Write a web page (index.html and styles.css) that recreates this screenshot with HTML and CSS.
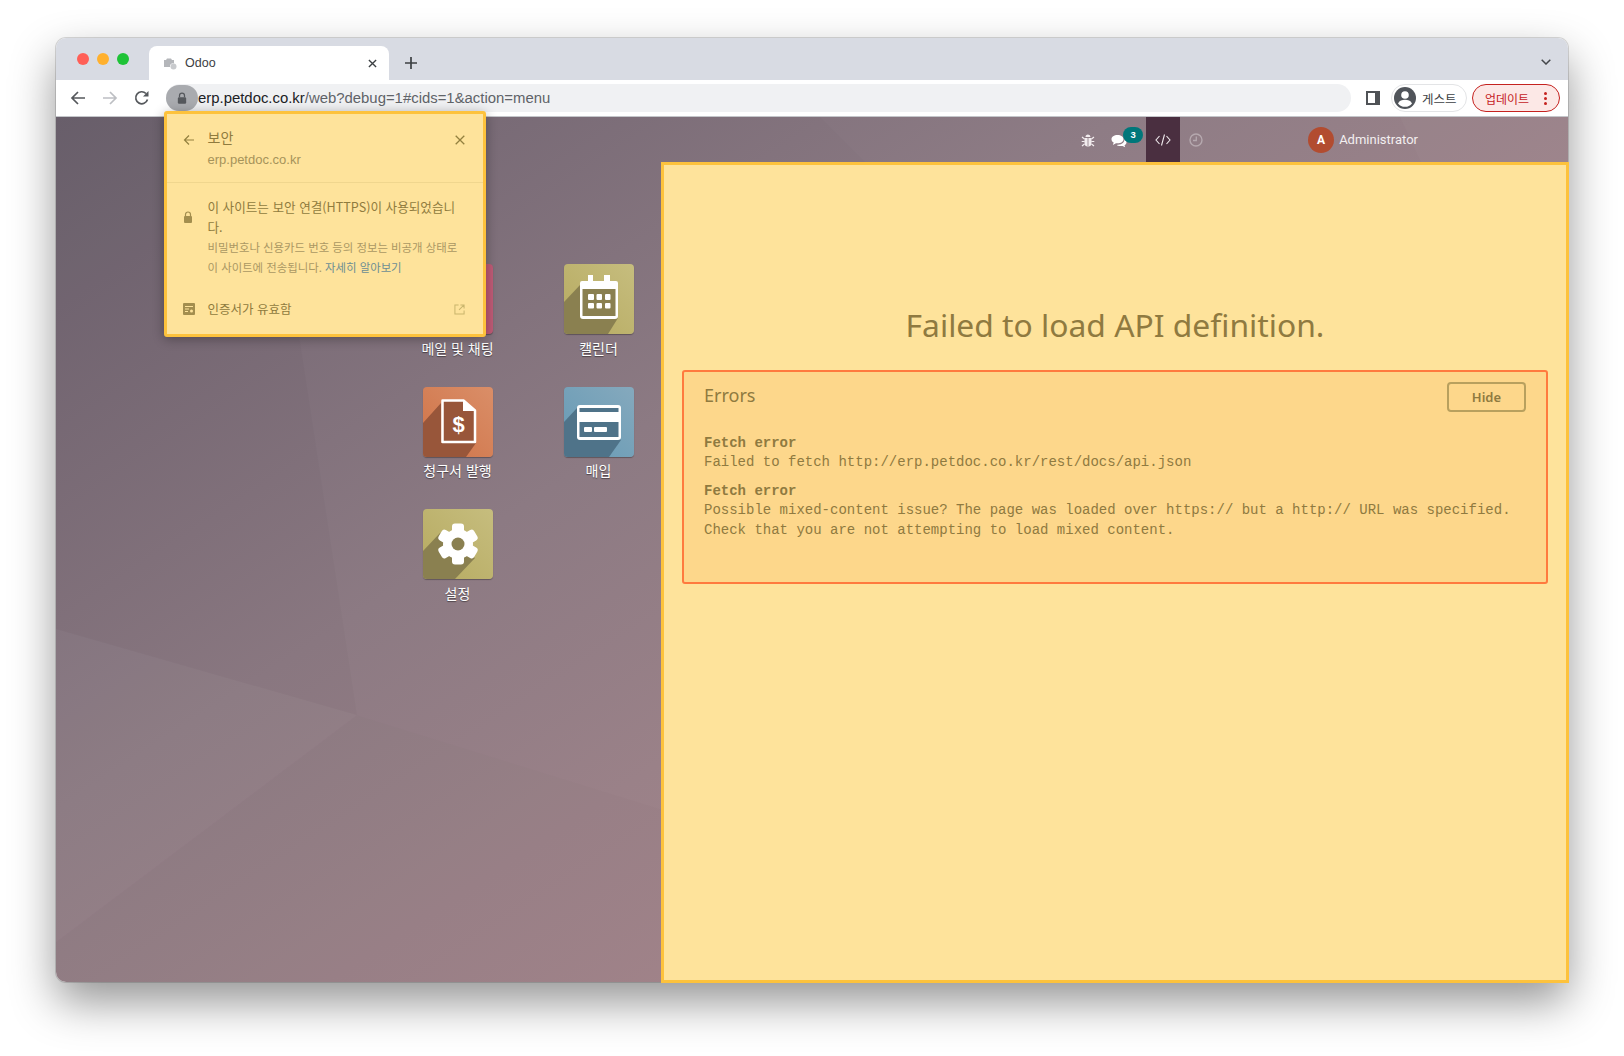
FILE: index.html
```html
<!DOCTYPE html>
<html lang="ko">
<head>
<meta charset="utf-8">
<title>Odoo</title>
<link rel="stylesheet" href="styles.css">
</head>
<body>
<div class="window">
  <div class="tabstrip">
    <div class="lights"><span class="light red"></span><span class="light amber"></span><span class="light green"></span></div>
    <div class="tab">
      <svg class="favicon" viewBox="0 0 14 14"><path d="M1 4h2l1-1.500h4L9 4h2v3.500a3 3 0 0 0-4 3.500H1z" fill="#b4b6ba"/><circle cx="10.500" cy="10.500" r="3" fill="#c8cacd"/></svg>
      <span class="tab-title">Odoo</span>
      <svg class="tab-close" viewBox="0 0 10 10"><path d="M1 1l8 8M9 1l-8 8" stroke="#3c4043" stroke-width="1.500"/></svg>
    </div>
    <svg class="newtab" viewBox="0 0 12 12"><path d="M6 0v12M0 6h12" stroke="#3c4043" stroke-width="1.700"/></svg>
    <svg class="tab-more" viewBox="0 0 10 6"><path d="M.7.7L5 5l4.300-4.300" fill="none" stroke="#44474b" stroke-width="1.500"/></svg>
  </div>
  <div class="toolbar">
    <svg class="nav" viewBox="0 0 16 16"><path d="M15 8H2M8 2L2 8l6 6" fill="none" stroke="#55585c" stroke-width="1.700"/></svg>
    <svg class="nav" viewBox="0 0 16 16"><path d="M1 8h13M8 2l6 6-6 6" fill="none" stroke="#bdbfc3" stroke-width="1.700"/></svg>
    <svg class="nav" viewBox="0 0 16 16"><path d="M13.500 9.500A6 6 0 1 1 12 3.500" fill="none" stroke="#55585c" stroke-width="1.700"/><path d="M14.500 1v5.500H9z" fill="#55585c"/></svg>
    <div class="omnibox">
      <span class="lock-pill"><svg class="lock-icon" viewBox="0 0 12 14"><path d="M3 6V4a3 3 0 0 1 6 0v2" fill="none" stroke="#55585c" stroke-width="1.500"/><rect x="1" y="6" width="10" height="8" rx="1.500" fill="#55585c"/></svg></span>
      <span class="url"><span class="host">erp.petdoc.co.kr</span>/web?debug=1#cids=1&amp;action=menu</span>
    </div>
    <svg class="sidepanel" viewBox="0 0 14 14"><path d="M0 0h14v14H0z" fill="#4f5256"/><path d="M2 2h7v10H2z" fill="#fff"/></svg>
    <div class="guest">
      <svg class="guest-avatar" viewBox="0 0 22 22"><circle cx="11" cy="11" r="11" fill="#50545a"/><circle cx="11" cy="8" r="3.800" fill="#fff"/><path d="M4 16.500c1.500-3 4-3.700 7-3.700s5.500.7 7 3.700a9 9 0 0 1-14 0z" fill="#fff"/></svg>
      <span class="guest-label">게스트</span>
    </div>
    <div class="update">
      <span class="update-label">업데이트</span>
      <span class="update-dots"><i></i><i></i><i></i></span>
    </div>
  </div>
  <div class="content">
    <svg class="facets" viewBox="0 0 1512 865" preserveAspectRatio="none">
      <defs>
        <linearGradient id="bg" gradientUnits="userSpaceOnUse" x1="0" y1="0" x2="635" y2="973">
          <stop offset="0" stop-color="#6b606d"/>
          <stop offset=".5" stop-color="#8c7a83"/>
          <stop offset=".75" stop-color="#9a8188"/>
          <stop offset="1" stop-color="#a6868c"/>
        </linearGradient>
      </defs>
      <rect width="1512" height="865" fill="url(#bg)"/>
      <polygon points="0,0 210,0 301,598 0,512" fill="#000" opacity=".02"/>
      <polygon points="0,512 301,598 0,825" fill="#fff" opacity=".015"/>
      <polygon points="0,825 301,598 605,692 605,865 0,865" fill="#000" opacity=".008"/>
      <polygon points="764,0 1512,0 1512,45 809,45" fill="#fff" opacity=".018"/>
      <polygon points="1344,0 1512,0 1512,45 1365,45" fill="#fff" opacity=".025"/>
    </svg>
    <div class="topbar">
      <span class="sys-item sys-bug"><svg class="sys-icon" viewBox="0 0 14 14"><path d="M4.500 4a2.500 2.500 0 0 1 5 0zM3.500 5h7v5a3.500 3.500 0 0 1-7 0z" fill="#f2ecee"/><path d="M1 4l2.500 2M13 4l-2.500 2M.7 8.500h3M13.300 8.500h-3M1 13l2.500-2M13 13l-2.500-2" stroke="#f2ecee" stroke-width="1.200"/><path d="M7 5v8" stroke="#8c7a82" stroke-width=".8"/></svg></span>
      <span class="sys-item sys-chat">
        <svg class="chat-icon" viewBox="0 0 16 14"><path d="M6.500 1C3 1 .5 2.800.5 5.200c0 1.400.9 2.600 2.200 3.400L1.800 11 5 9.300h1.500c3.500 0 6-1.700 6-4.100S10 1 6.500 1z" fill="#fff"/><path d="M13.500 5.500c1.300.7 2 1.800 2 3 0 1.200-.8 2.200-2 2.800l.7 2-2.700-1.400H9c-1.300 0-2.500-.4-3.300-1 4 0 7.800-1.800 7.800-5.400z" fill="#fff"/></svg>
        <span class="badge">3</span>
      </span>
      <span class="sys-item sys-debug"><svg class="code-icon" viewBox="0 0 16 12"><path d="M4.500 2L1 6l3.500 4M11.500 2L15 6l-3.500 4M9.500.5l-3 11" fill="none" stroke="#efe9ec" stroke-width="1.100"/></svg></span>
      <span class="sys-item sys-clock"><svg class="sys-icon" viewBox="0 0 14 14"><circle cx="7" cy="7" r="6" fill="none" stroke="#b5a8ae" stroke-width="1.400"/><path d="M7.300 3.500V7.500H4" fill="none" stroke="#b5a8ae" stroke-width="1.300"/></svg></span>
      <span class="user"><span class="avatar">A</span><span class="user-name">Administrator</span></span>
    </div>
    <div class="apps">
      <a class="app">
        <span class="tile tile-mail"></span>
        <span class="app-label">메일 및 채팅</span>
      </a>
      <a class="app">
        <span class="tile tile-olive">
          <svg class="tile-art" viewBox="0 0 70 70">
            <polygon points="0,38 16,21 54,54 44,70 0,70" fill="#8a8050"/>
            <path d="M24 11h5v6h11v-6h6v6h6a2 2 0 0 1 2 2v33a3 3 0 0 1-3 3H19a3 3 0 0 1-3-3V19a2 2 0 0 1 2-2h6z" fill="#fff"/>
            <rect x="18.500" y="25" width="33" height="27" fill="#8a8050"/>
            <g fill="#fff"><rect x="24" y="30" width="6" height="6" rx="1"/><rect x="32.500" y="30" width="5.500" height="6" rx="1"/><rect x="41" y="30" width="5.500" height="6" rx="1"/><rect x="24" y="39" width="6" height="5.500" rx="1"/><rect x="32.500" y="39" width="5.500" height="5.500" rx="1"/><rect x="41" y="39" width="5.500" height="5.500" rx="1"/></g>
          </svg>
        </span>
        <span class="app-label">캘린더</span>
      </a>
      <a class="app">
        <span class="tile tile-orange">
          <svg class="tile-art" viewBox="0 0 70 70">
            <polygon points="0,36 18,16 18,56 53,56 43,70 0,70" fill="#98563a"/>
            <path d="M19.500 13.500H40.500L52 23.500V55H19.500z" fill="#98563a" stroke="#fff" stroke-width="2.500" stroke-linejoin="round"/>
            <path d="M40 12.500v11.500h13z" fill="#fff"/>
            <text class="dollar" x="35.500" y="44.500" text-anchor="middle">$</text>
          </svg>
        </span>
        <span class="app-label">청구서 발행</span>
      </a>
      <a class="app">
        <span class="tile tile-blue">
          <svg class="tile-art" viewBox="0 0 70 70">
            <polygon points="0,35 13,21 57,53 45,70 0,70" fill="#4f7389"/>
            <rect x="13" y="18" width="44" height="35" rx="3" fill="#fff"/>
            <rect x="15.500" y="21" width="39" height="4" fill="#4f7389"/>
            <rect x="15.500" y="35" width="39" height="15" fill="#4f7389"/>
            <rect x="20" y="40" width="8" height="5" rx="1" fill="#fff"/>
            <rect x="30" y="40" width="13" height="5" rx="1" fill="#fff"/>
          </svg>
        </span>
        <span class="app-label">매입</span>
      </a>
      <a class="app">
        <span class="tile tile-olive">
          <svg class="tile-art" viewBox="0 0 70 70">
            <polygon points="0,42 17,24 52,49 32,70 0,70" fill="#8a8050"/>
            <g fill="#fff">
              <rect x="29" y="14.500" width="12" height="41" rx="3"/>
              <rect x="29" y="14.500" width="12" height="41" rx="3" transform="rotate(60 35 35)"/>
              <rect x="29" y="14.500" width="12" height="41" rx="3" transform="rotate(120 35 35)"/>
              <circle cx="35" cy="35" r="15"/>
            </g>
            <circle cx="35" cy="35" r="6.500" fill="#8a8050"/>
          </svg>
        </span>
        <span class="app-label">설정</span>
      </a>
    </div>
  </div>

  <div class="security">
    <div class="sec-head">
      <svg class="sec-arrow" viewBox="0 0 12 12"><path d="M11 6H1.500M6 1.500L1.500 6 6 10.500" fill="none" stroke="#93803f" stroke-width="1.200"/></svg>
      <div class="sec-titles">
        <div class="sec-title">보안</div>
        <div class="sec-host">erp.petdoc.co.kr</div>
      </div>
      <svg class="sec-close" viewBox="0 0 10 10"><path d="M.7.7l8.600 8.600M9.300.7L.7 9.300" stroke="#93803f" stroke-width="1.300"/></svg>
    </div>
    <div class="sec-body">
      <svg class="sec-lock" viewBox="0 0 10 12"><path d="M2.500 5V3.500a2.500 2.500 0 0 1 5 0V5" fill="none" stroke="#a38e4e" stroke-width="1.200"/><rect x="1" y="5" width="8" height="7" rx="1" fill="#a38e4e"/></svg>
      <div class="sec-text">
        <div class="sec-strong">이 사이트는 보안 연결(HTTPS)이 사용되었습니다.</div>
        <div class="sec-note">비밀번호나 신용카드 번호 등의 정보는 비공개 상태로 이 사이트에 전송됩니다. <span class="sec-link">자세히 알아보기</span></div>
      </div>
    </div>
    <div class="sec-cert">
      <svg class="sec-certicon" viewBox="0 0 12 12"><rect width="12" height="12" rx="1" fill="#a38e4e"/><path d="M2 3.500h8M2 6h4M2 8.500h3" stroke="#fee39b" stroke-width="1"/><circle cx="8.500" cy="8" r="1.500" fill="#fee39b"/></svg>
      <span class="sec-certlabel">인증서가 유효함</span>
      <svg class="sec-ext" viewBox="0 0 12 12"><path d="M5 1H1v10h10V7M7 1h4v4M11 1L5.500 6.500" fill="none" stroke="#c9b56d" stroke-width="1.100"/></svg>
    </div>
  </div>

  <div class="swagger">
    <h1 class="swagger-title">Failed to load API definition.</h1>
    <section class="errors">
      <header class="errors-head">
        <h2 class="errors-title">Errors</h2>
        <button class="hide-btn">Hide</button>
      </header>
      <div class="err-block">
        <b class="err-name">Fetch error</b>
        <span class="err-line">Failed to fetch http://erp.petdoc.co.kr/rest/docs/api.json</span>
      </div>
      <div class="err-block">
        <b class="err-name">Fetch error</b>
        <span class="err-line">Possible mixed-content issue? The page was loaded over https:// but a http:// URL was specified.</span>
        <span class="err-line">Check that you are not attempting to load mixed content.</span>
      </div>
    </section>
  </div>
</div>
</body>
</html>
```
FILE: styles.css
```css
* { box-sizing: border-box; }
html, body { margin: 0; height: 100%; }
body {
  width: 1624px;
  height: 1056px;
  padding: 38px 56px 74px;
  background: #fff;
  font-family: "Liberation Sans", "Noto Sans CJK KR", sans-serif;
  overflow: hidden;
}
.window {
  position: relative;
  width: 1512px;
  height: 944px;
  display: flex;
  flex-direction: column;
  border-radius: 10px;
  box-shadow: 0 20px 45px 0 rgba(0, 0, 0, .42), 0 0 0 1px rgba(0, 0, 0, .14);
}
.tabstrip {
  height: 42px;
  flex: none;
  display: flex;
  align-items: flex-end;
  background: #d8dbe3;
  border-radius: 10px 10px 0 0;
  padding-left: 21px;
}
.lights { display: flex; gap: 8px; align-self: flex-start; padding-top: 15px; width: 72px; }
.light { width: 12px; height: 12px; border-radius: 50%; }
.red { background: #ff5f57; }
.amber { background: #ffb02e; }
.green { background: #1ec337; }
.tab {
  width: 240px;
  height: 34px;
  background: #fff;
  border-radius: 8px 8px 0 0;
  display: flex;
  align-items: center;
  padding: 0 12px 0 14px;
}
.favicon { width: 14px; height: 14px; }
.tab-title { margin-left: 8px; flex: 1; font-size: 12.500px; color: #3c4043; }
.tab-close { width: 9px; height: 9px; }
.newtab { width: 12px; height: 12px; margin: 0 0 11px 16px; }
.tab-more { width: 10px; height: 6px; margin: 0 17px 15px auto; }
.toolbar {
  height: 37px;
  flex: none;
  display: flex;
  align-items: center;
  background: #fff;
  border-bottom: 1px solid #c4c6ca;
  padding-left: 14px;
}
.nav { width: 16px; height: 16px; margin-right: 16px; }
.omnibox {
  width: 1185px;
  height: 28px;
  border-radius: 14px;
  background: #f0f1f3;
  display: flex;
  align-items: center;
}
.lock-pill {
  width: 32px;
  height: 26px;
  border-radius: 13px;
  background: #a9abaf;
  display: flex;
  align-items: center;
  justify-content: center;
}
.lock-icon { width: 10px; height: 12px; }
.url { font-size: 14.900px; line-height: 26px; color: #5f6368; }
.host { color: #202124; }
.sidepanel { width: 14px; height: 14px; margin-left: 15px; }
.guest {
  width: 76px;
  height: 28px;
  margin-left: 11px;
  border: 1px solid #e3e4e6;
  border-radius: 14px;
  display: flex;
  align-items: center;
  padding-left: 2px;
  gap: 6px;
}
.guest-avatar { width: 22px; height: 22px; }
.guest-label { font-size: 12.500px; color: #3c4043; }
.update {
  width: 88px;
  height: 28px;
  margin-left: 5px;
  border: 1px solid #c5221f;
  border-radius: 14px;
  background: #fce8e6;
  display: flex;
  align-items: center;
  padding-left: 12px;
}
.update-label { font-size: 12px; color: #c5221f; flex: 1; }
.update-dots { display: flex; flex-direction: column; gap: 2px; margin-right: 12px; }
.update-dots i { width: 3px; height: 3px; border-radius: 50%; background: #c5221f; }
.content {
  flex: 1;
  position: relative;
  overflow: hidden;
  border-radius: 0 0 10px 10px;
}
.facets { position: absolute; inset: 0; width: 100%; height: 100%; }
.topbar {
  position: relative;
  height: 45px;
  display: flex;
  align-items: center;
  justify-content: flex-end;
  padding-right: 150px;
  color: #fff;
}
.sys-item { height: 45px; display: flex; align-items: center; justify-content: center; position: relative; }
.sys-bug { width: 33px; }
.sys-chat { width: 42px; justify-content: flex-start; padding-left: 7px; }
.sys-debug { width: 34px; background: #4a2f40; }
.sys-clock { width: 32px; }
.sys-icon { width: 14px; height: 14px; }
.chat-icon { width: 16px; height: 14px; margin-top: 2px; }
.code-icon { width: 16px; height: 12px; }
.badge {
  position: absolute;
  left: 19px;
  top: 10px;
  width: 20px;
  height: 16px;
  border-radius: 8px;
  background: #00777a;
  font: 700 9.500px/16px "Liberation Sans", sans-serif;
  text-align: center;
}
.user { display: flex; align-items: center; margin-left: 96px; gap: 5px; }
.avatar {
  width: 26px;
  height: 26px;
  border-radius: 50%;
  background: #b24c30;
  font: 700 12px/26px Roboto, sans-serif;
  text-align: center;
}
.user-name { font: 13px Roboto, sans-serif; color: #f3eff0; }
.apps {
  position: relative;
  margin: 102px 0 0 331px;
  display: grid;
  grid-template-columns: repeat(2, 141px);
  grid-auto-rows: 122.500px;
}
.app { display: flex; flex-direction: column; align-items: center; }
.tile {
  position: relative;
  display: block;
  width: 70px;
  height: 70px;
  border-radius: 4px;
  overflow: hidden;
  box-shadow: 0 1px 1px rgba(0, 0, 0, .3);
}
.tile-mail { background: #bf5b76; }
.tile-olive { background: linear-gradient(to top right, #b6aa60, #c6bd7e); }
.tile-orange { background: linear-gradient(to top right, #cf7347, #da8e68); }
.tile-blue { background: linear-gradient(to top right, #669ab5, #85a9bd); }
.tile-art { display: block; width: 70px; height: 70px; }
.dollar { font: 700 22px "Liberation Sans", sans-serif; fill: #fff; }
.app-label {
  margin-top: 3.500px;
  font: 14px/20px "Noto Sans CJK KR", sans-serif;
  color: #fff;
  text-shadow: 0 1px 1px rgba(0, 0, 0, .45);
}
.security {
  position: absolute;
  left: 108px;
  top: 73px;
  width: 322px;
  height: 226px;
  background: #fee39b;
  border: 3px solid #fdc23c;
  border-radius: 3px;
  box-shadow: 0 2px 12px rgba(0, 0, 0, .32);
  display: flex;
  flex-direction: column;
  color: #8f7b3e;
}
.sec-head {
  display: flex;
  align-items: flex-start;
  height: 69px;
  padding: 13px 18px 0 16px;
  border-bottom: 1px solid #f0d68e;
}
.sec-arrow { width: 12px; height: 12px; margin-top: 7px; }
.sec-titles { flex: 1; margin-left: 12.500px; }
.sec-title { font: 14px/20px "Noto Sans CJK KR", sans-serif; }
.sec-host { margin-top: 5px; font-size: 13px; line-height: 16px; color: #a6935a; }
.sec-close { width: 10px; height: 10px; margin-top: 8px; }
.sec-body { display: flex; align-items: flex-start; padding: 14px 0 0 16px; }
.sec-lock { width: 10px; height: 12px; margin: 14px 14.500px 0 0; flex: none; }
.sec-text { width: 254px; }
.sec-strong { width: 248px; font: 12.600px/20px "Noto Sans CJK KR", sans-serif; word-break: break-all; }
.sec-note { font: 11.400px/20px "Noto Sans CJK KR", sans-serif; color: #ab9863; }
.sec-link { color: #6d8e93; }
.sec-cert { display: flex; align-items: center; padding: 22px 18px 0 16px; }
.sec-certicon { width: 12px; height: 12px; }
.sec-certlabel { flex: 1; margin-left: 12.500px; font: 12.500px/20px "Noto Sans CJK KR", sans-serif; }
.sec-ext { width: 11px; height: 11px; }
.swagger {
  position: absolute;
  left: 605px;
  top: 124px;
  right: -1px;
  bottom: -1px;
  background: #fee39b;
  border: 3px solid #fdc23c;
  padding: 138px 18px 0;
  color: #8f7a40;
}
.swagger-title {
  margin: 0;
  font: 400 31.800px/44px "Noto Sans", sans-serif;
  text-align: center;
}
.errors {
  height: 214px;
  margin: 23px 0 0 0;
  padding: 10px 20px 0;
  background: #fdd78b;
  border: 2px solid #ff7a3e;
  border-radius: 3px;
}
.errors-head { display: flex; justify-content: space-between; align-items: flex-start; height: 30px; margin-bottom: 21.500px; }
.errors-title { margin: 0; font: 400 18px/26px "Noto Sans", sans-serif; }
.hide-btn {
  width: 79px;
  height: 30px;
  padding: 0;
  background: transparent;
  border: 2px solid #b8a05e;
  border-radius: 4px;
  font: 600 13px "Noto Sans", sans-serif;
  color: #8f7a40;
}
.err-block { margin-bottom: 10px; font: 14px/20px "Liberation Mono", monospace; }
.err-name { display: block; line-height: 18px; }
.err-line { display: block; }
```
